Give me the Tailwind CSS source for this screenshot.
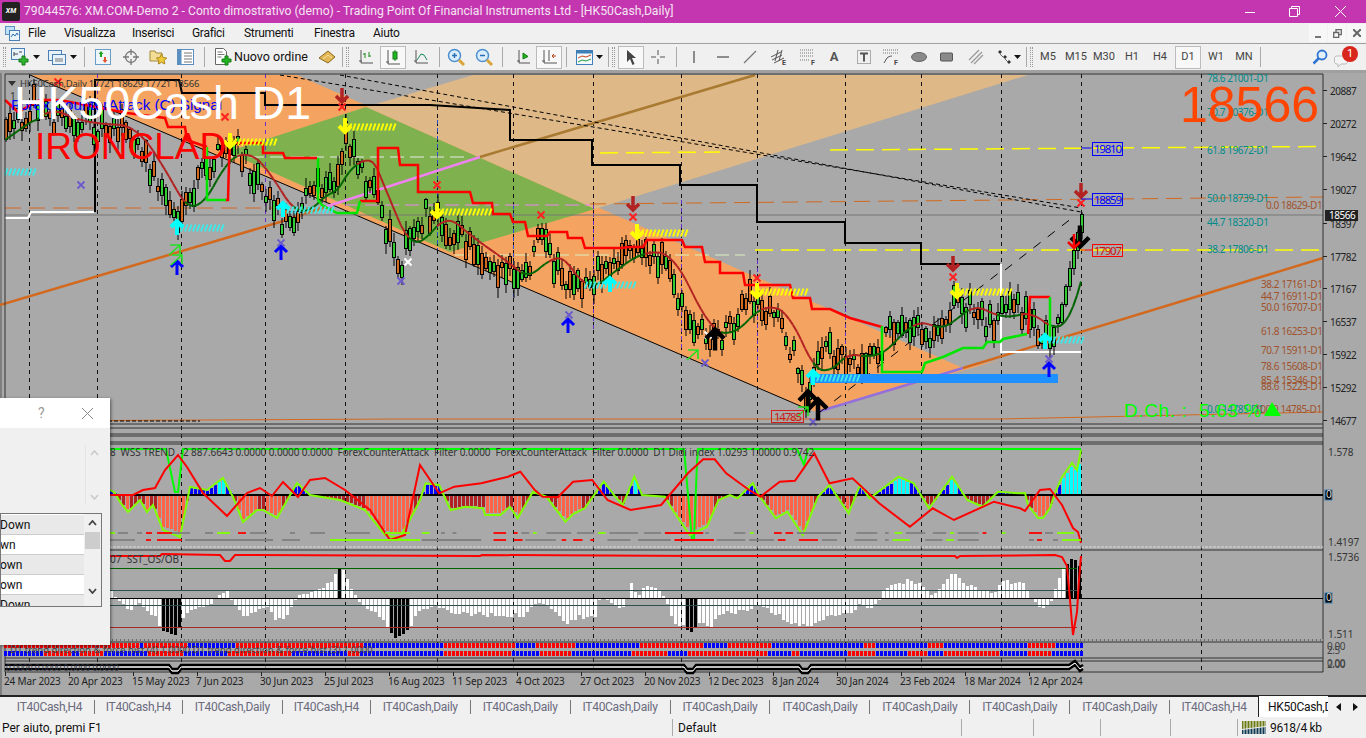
<!DOCTYPE html>
<html>
<head>
<meta charset="utf-8">
<script src="https://cdn.jsdelivr.net/npm/@tailwindcss/browser@4"></script>
</head>
<body class="m-0 overflow-hidden bg-[#f0f0f0]">
<div class="relative flex h-[738px] w-[1366px] flex-col overflow-hidden font-['Roboto',sans-serif] text-[12px] text-[#111]">

  <!-- title bar -->
  <div class="flex h-[23px] shrink-0 items-center bg-[#c436b0] text-white">
    <div class="ml-[2px] flex h-[19px] w-[18px] items-center justify-center rounded-[2px] bg-[#222] text-[7px] font-bold italic text-white">XM</div>
    <div class="ml-[4px] whitespace-nowrap text-[12.2px] text-[#f6e3f3]">79044576: XM.COM-Demo 2 - Conto dimostrativo (demo) - Trading Point Of Financial Instruments Ltd - [HK50Cash,Daily]</div>
    <div class="ml-auto flex items-center">
      <svg class="mr-[34px]" width="10" height="10" viewBox="0 0 10 10"><path d="M0 5.5H10" stroke="#fff"/></svg>
      <svg class="mr-[35px]" width="11" height="11" viewBox="0 0 11 11" fill="none" stroke="#fff"><path d="M.5 2.5h8v8h-8zM2.5 2.5v-2h8v8h-2"/></svg>
      <svg class="mr-[20px]" width="11" height="11" viewBox="0 0 11 11" stroke="#fff"><path d="M0 0L11 11M11 0L0 11"/></svg>
    </div>
  </div>

  <!-- menu bar -->
  <div class="flex h-[20px] shrink-0 items-center bg-[#f0f0f0] text-[12px] tracking-[-0.3px]">
    <svg class="ml-[5px] mr-[8px]" width="15" height="15" viewBox="0 0 15 15"><rect x=".5" y=".5" width="9" height="8" fill="#bfe0f5" stroke="#5a8fc0"/><rect x="4.5" y="4.5" width="10" height="10" fill="#eaf4fb" stroke="#4a7fb5"/><path d="M6 11l2-3 2 2 2-3 1 2" fill="none" stroke="#2b6cb0"/></svg>
    <span class="w-[36px]">File</span>
    <span class="w-[68px]">Visualizza</span>
    <span class="w-[60px]">Inserisci</span>
    <span class="w-[52px]">Grafici</span>
    <span class="w-[70px]">Strumenti</span>
    <span class="w-[59px]">Finestra</span>
    <span>Aiuto</span>
    <div class="ml-auto flex h-[18px] gap-[1px]">
      <div class="flex w-[18px] items-end justify-center bg-[#f7f7f7] pb-[4px]"><div class="h-[2px] w-[6px] bg-[#777]"></div></div>
      <div class="flex w-[18px] items-center justify-center bg-[#f7f7f7]"><svg width="9" height="9" viewBox="0 0 9 9" fill="none" stroke="#666" stroke-width="1.3"><path d="M.7 3.5h5v5h-5zM3 3V.7h5.3v5H6"/></svg></div>
      <div class="flex w-[19px] items-center justify-center bg-[#f7f7f7]"><svg width="8" height="8" viewBox="0 0 8 8" stroke="#666" stroke-width="2"><path d="M0 0L8 8M8 0L0 8"/></svg></div>
    </div>
  </div>

  <!-- toolbar -->
  <div class="flex h-[27px] shrink-0 items-center border-t border-[#a0a0a0] bg-[#f0f0f0]">
    <div class="ml-[3px] h-[20px] w-[3px] border-x border-dotted border-[#999]"></div>
    <svg class="ml-[5px]" width="18" height="18" viewBox="0 0 18 18"><rect x=".5" y=".5" width="13" height="11" fill="#e8f2fa" stroke="#4a7fb5"/><path d="M3 6h4M3 4v4M8 4h3" stroke="#444"/><path d="M9 8h3V5h3v3h3v3h-3v3h-3v-3H9z" transform="translate(-1 3)" fill="#2fb52f" stroke="#157a15"/></svg>
    <svg class="ml-[4px]" width="7" height="4" viewBox="0 0 7 4"><path d="M0 0h7L3.500 4z" fill="#111"/></svg>
    <svg class="ml-[8px]" width="18" height="18" viewBox="0 0 18 18" fill="#e8f2fa" stroke="#4a7fb5"><rect x=".5" y="2.500" width="13" height="10"/><rect x="4.500" y="6.500" width="13" height="10"/><path d="M7 11h8M7 13h8" stroke="#777"/></svg>
    <svg class="ml-[4px]" width="7" height="4" viewBox="0 0 7 4"><path d="M0 0h7L3.500 4z" fill="#111"/></svg>
    <div class="ml-[7px] h-[20px] w-[1px] bg-[#aaa]"></div>
    <svg class="ml-[9px]" width="18" height="18" viewBox="0 0 18 18"><rect x="1.500" y="1.500" width="15" height="15" fill="#eef6fb" stroke="#6a9cc5"/><path d="M6 9V6H4.500L7 3l2.500 3H8v3z" fill="#22a322"/><path d="M10 9v3H8.500l2.500 3 2.500-3H12V9z" fill="#e0552a"/></svg>
    <svg class="ml-[10px]" width="18" height="18" viewBox="0 0 18 18" fill="none" stroke="#777" stroke-width="1.300"><circle cx="9" cy="9" r="5.500"/><path d="M9 1v6M9 11v6M1 9h6M11 9h6"/></svg>
    <svg class="ml-[9px]" width="18" height="18" viewBox="0 0 18 18"><path d="M1 5V3h5l1 2h6v8H1z" fill="#f3dc95" stroke="#a58b3a"/><path d="M12.500 6l1.700 3.500 3.500.5-2.500 2.500.6 3.500-3.300-1.700L9.300 16l.6-3.500L7.400 10l3.500-.5z" fill="#f0c93a" stroke="#a8861c"/></svg>
    <svg class="ml-[10px]" width="18" height="18" viewBox="0 0 18 18"><rect x=".5" y="1.500" width="16" height="15" fill="#fff" stroke="#5a8fc0"/><rect x=".5" y="1.500" width="4" height="15" fill="#5a8fc0"/><path d="M7 5h8M7 8h8M7 11h8M7 14h8" stroke="#777"/></svg>
    <div class="ml-[9px] h-[20px] w-[1px] bg-[#aaa]"></div>
    <svg class="ml-[9px]" width="18" height="18" viewBox="0 0 18 18"><path d="M1.500.5h8l3 3v13h-11z" fill="#fff" stroke="#666"/><path d="M3.500 4h5M3.500 6.500h7M3.500 9h4" stroke="#777"/><path d="M10 9h3v3h3v3h-3v3h-3v-3H7v-3h3z" transform="translate(1 -1)" fill="#22b522" stroke="#157a15"/></svg>
    <span class="ml-[2px] w-[73px] whitespace-nowrap text-[12.5px]">Nuovo ordine</span>
    <svg class="ml-[11px]" width="18" height="18" viewBox="0 0 18 18"><path d="M1 10L10 3l7 6-7 6z" fill="#e2b654" stroke="#8a6a1c"/><path d="M5 11l5-4 4 3" fill="none" stroke="#f7e3a6"/></svg>
    <div class="ml-[6px] h-[20px] w-[1px] bg-[#aaa]"></div>
    <div class="ml-[3px] h-[20px] w-[3px] border-x border-dotted border-[#999]"></div>
    <svg class="ml-[9px]" width="16" height="16" viewBox="0 0 16 16" fill="none" stroke="#555"><path d="M3 1v13h12M1 12h3"/><path d="M7 9V4M7 5H5M11 8V3M11 7h2" stroke="#1a8a1a"/></svg>
    <div class="ml-[6px] flex h-[23px] w-[26px] items-center justify-center border border-[#bbb] bg-[#f8f8f8]"><svg width="16" height="17" viewBox="0 0 16 17" fill="none" stroke="#555"><path d="M3 1v14h12M1 13h3"/><rect x="8" y="3" width="4" height="7" fill="#22b522" stroke="#157a15"/><path d="M10 1v2M10 10v2" stroke="#157a15"/></svg></div>
    <svg class="ml-[7px]" width="16" height="16" viewBox="0 0 16 16" fill="none" stroke="#555"><path d="M3 1v13h12M1 12h3"/><path d="M4 11l4-6 3 1 3 5" stroke="#1a8a5a"/></svg>
    <div class="ml-[10px] h-[20px] w-[1px] bg-[#aaa]"></div>
    <svg class="ml-[7px]" width="19" height="19" viewBox="0 0 19 19"><circle cx="7.500" cy="7.500" r="6" fill="#d9edfb" stroke="#4a8fd0" stroke-width="1.500"/><path d="M5 7.500h5M7.500 5v5" stroke="#2d6fb5" stroke-width="1.500"/><path d="M12 12l5 5" stroke="#d8a53a" stroke-width="3"/></svg>
    <svg class="ml-[9px]" width="19" height="19" viewBox="0 0 19 19"><circle cx="7.500" cy="7.500" r="6" fill="#d9edfb" stroke="#4a8fd0" stroke-width="1.500"/><path d="M5 7.500h5" stroke="#2d6fb5" stroke-width="1.500"/><path d="M12 12l5 5" stroke="#d8a53a" stroke-width="3"/></svg>
    <div class="ml-[8px] h-[20px] w-[1px] bg-[#aaa]"></div>
    <svg class="ml-[11px]" width="17" height="16" viewBox="0 0 17 16" fill="none" stroke="#555"><path d="M5 1v13h11M3 12h3"/><path d="M9 4l5 3.500L9 10z" fill="#22b522" stroke="#157a15"/></svg>
    <div class="ml-[5px] flex h-[23px] w-[26px] items-center justify-center border border-[#bbb] bg-[#f8f8f8]"><svg width="17" height="16" viewBox="0 0 17 16" fill="none" stroke="#555"><path d="M3 1v13h13M1 12h3M8 1v11"/><path d="M15 7h-4M13 5l-2 2 2 2" stroke="#b5401a"/></svg></div>
    <div class="ml-[4px] h-[20px] w-[1px] bg-[#aaa]"></div>
    <svg class="ml-[9px]" width="17" height="15" viewBox="0 0 17 15"><rect x=".5" y=".5" width="16" height="14" fill="#f4f9fd" stroke="#3f7fb8"/><rect x=".5" y=".5" width="16" height="3" fill="#3f7fb8"/><path d="M2 8l4-2 4 1 5-2" fill="none" stroke="#c8451a"/><path d="M2 12l4-2 4 1 5-2" fill="none" stroke="#1f9a3a"/></svg>
    <svg class="ml-[3px]" width="7" height="4" viewBox="0 0 7 4"><path d="M0 0h7L3.500 4z" fill="#111"/></svg>
    <div class="ml-[5px] h-[20px] w-[1px] bg-[#aaa]"></div>
    <div class="ml-[3px] h-[20px] w-[3px] border-x border-dotted border-[#999]"></div>
    <div class="ml-[3px] flex h-[23px] w-[26px] items-center justify-center border border-[#bbb] bg-[#f8f8f8]"><svg width="11" height="15" viewBox="0 0 11 15"><path d="M1 0l9 8H6l2.500 6-2 1L4 9l-3 3z" fill="#444"/></svg></div>
    <svg class="ml-[6px]" width="16" height="16" viewBox="0 0 16 16" stroke="#555"><path d="M8 1v5M8 10v5M1 8h5M10 8h5"/></svg>
    <div class="ml-[10px] h-[20px] w-[1px] bg-[#aaa]"></div>
    <svg class="ml-[9px]" width="16" height="16" viewBox="0 0 16 16" stroke="#555" stroke-width="1.300"><path d="M8 2v12"/></svg>
    <svg class="ml-[13px]" width="16" height="16" viewBox="0 0 16 16" stroke="#555" stroke-width="1.300"><path d="M2 8h12"/></svg>
    <svg class="ml-[11px]" width="16" height="16" viewBox="0 0 16 16" stroke="#777" stroke-width="1.200"><path d="M2 14L14 2"/></svg>
    <svg class="ml-[13px]" width="16" height="18" viewBox="0 0 16 18" stroke="#555" fill="none"><path d="M0 9l10-5M1 12l10-5M3 15L13 10M4 13l3-11M8 13l3-11"/><text x="11" y="17" font-size="7" font-weight="700" fill="#444" stroke="none">E</text></svg>
    <svg class="ml-[13px]" width="16" height="18" viewBox="0 0 16 18" stroke="#777" fill="none" stroke-dasharray="1 1"><path d="M0 2h14M0 5h14M0 8h14M0 12h10"/><text x="11" y="17" font-size="7" font-weight="700" fill="#444" stroke="none" stroke-dasharray="0">F</text></svg>
    <span class="ml-[10px] flex w-[16px] justify-center text-[13px] font-bold text-[#555]">A</span>
    <svg class="ml-[14px]" width="16" height="16" viewBox="0 0 16 16" fill="none" stroke="#666" stroke-dasharray="1 1"><rect x="1.500" y="1.500" width="13" height="13"/><path d="M4 4.500h8M8 4.500v8" stroke="#555" stroke-width="2" stroke-dasharray="0"/></svg>
    <svg class="ml-[11px]" width="16" height="18" viewBox="0 0 16 18" stroke="#777" fill="none"><path d="M0 2h15M0 5h15" stroke-dasharray="1 1"/><path d="M1 15l3-5c1-1 3-2 5-2" stroke="#555"/><text x="11" y="17" font-size="7" font-weight="700" fill="#444" stroke="none">F</text></svg>
    <svg class="ml-[12px]" width="16" height="12" viewBox="0 0 16 12"><ellipse cx="8" cy="6" rx="7.500" ry="4.500" fill="#8a8a8a" stroke="#666"/></svg>
    <svg class="ml-[12px]" width="16" height="12" viewBox="0 0 16 12"><rect x="1.500" y="2" width="12" height="8" rx="1" fill="#8a8a8a" stroke="#555"/></svg>
    <svg class="ml-[13px]" width="16" height="16" viewBox="0 0 16 16" stroke="#999" stroke-width="1.300"><path d="M1 11L11 1M3 14L14 3M6 15L15 6"/></svg>
    <svg class="ml-[12px]" width="16" height="16" viewBox="0 0 16 16" fill="#333"><path d="M2 3l2-2 2 2-2 2zM7 8l2-2 2 2-2 2zM11 13l2-2 2 2-2 2z"/><path d="M4 5l3 3M9 10l3 3" stroke="#666"/></svg>
    <svg class="ml-[2px]" width="7" height="4" viewBox="0 0 7 4"><path d="M0 0h7L3.500 4z" fill="#111"/></svg>
    <div class="ml-[5px] h-[20px] w-[1px] bg-[#aaa]"></div>
    <div class="ml-[3px] h-[20px] w-[3px] border-x border-dotted border-[#999]"></div>
    <div class="ml-[1px] flex text-[11px] text-[#444]">
      <span class="flex h-[23px] w-[28px] items-center justify-center">M5</span>
      <span class="flex h-[23px] w-[28px] items-center justify-center">M15</span>
      <span class="flex h-[23px] w-[28px] items-center justify-center">M30</span>
      <span class="flex h-[23px] w-[28px] items-center justify-center">H1</span>
      <span class="flex h-[23px] w-[28px] items-center justify-center">H4</span>
      <span class="flex h-[23px] w-[26px] mx-[1px] items-center justify-center border border-[#bbb] bg-[#f8f8f8]">D1</span>
      <span class="flex h-[23px] w-[28px] items-center justify-center">W1</span>
      <span class="flex h-[23px] w-[28px] items-center justify-center">MN</span>
    </div>
    <div class="ml-[2px] h-[20px] w-[1px] bg-[#aaa]"></div>
    <svg class="ml-[51px]" width="16" height="16" viewBox="0 0 16 16" fill="none"><circle cx="10" cy="6" r="4.500" stroke="#2f74d0" stroke-width="1.800" fill="#e4f0fc"/><path d="M7 9L1.500 14.500" stroke="#2f74d0" stroke-width="2.500"/></svg>
    <div class="relative ml-[6px] h-[22px] w-[24px]">
      <svg width="14" height="12" viewBox="0 0 14 12" class="mt-[9px]"><path d="M2 1h10l1.500 1.500v5L12 9H7l-3 3V9H2L.5 7.500v-5z" fill="#f4f4f4" stroke="#bbb"/></svg>
      <div class="absolute left-[8px] top-[0px] flex h-[16px] w-[16px] items-center justify-center rounded-full bg-[#d8261c] text-[11px] text-white">1</div>
    </div>
  </div>

  <!-- chart -->
  <div class="relative h-[625px] w-[1366px] shrink-0 bg-[#a9a9a9]">
    <svg id="c" class="block" width="1366" height="625" viewBox="0 70 1366 625" font-family="Noto Sans">
      <rect x="0" y="70" width="1366" height="625" fill="#a9a9a9"/>
      <rect x="0" y="70" width="2" height="625" fill="#7f7f7f"/>
      <rect x="0" y="70" width="1366" height="3" fill="#a0a0a0"/>
      <!-- channel fills -->
      <polygon points="30,75 297,75 963,368 1000,360 817,412 805,408" fill="#f4a460"/>
      <polygon points="473,75 1028,75 595,209 366,107" fill="#deb887"/>
      <polygon points="227,152 366,107 595,209 450,252" fill="#7fb24e"/>
      <g id="v"></g>
      <!-- long lines -->
      <path d="M30 75L805 408" stroke="#000" fill="none"/>
      <path d="M0 305L280 222L325 207" stroke="#d2691e" stroke-width="2.500" fill="none"/>
      <path d="M325 207L480 157" stroke="#ee82ee" stroke-width="2.500" fill="none"/>
      <path d="M480 157L755 75" stroke="#a97a32" stroke-width="2.500" fill="none"/>
      <path d="M817 412L963 368" stroke="#9370db" stroke-width="2.500" fill="none"/>
      <path d="M963 368L1323 258" stroke="#d2691e" stroke-width="2.500" fill="none"/>
      <path d="M5 208H340M590 204L1323 197" stroke="#d2691e" stroke-dasharray="16 8" fill="none"/>
      <path d="M5 215H1323" stroke="#777" fill="none"/>
      <path d="M230 157H470" stroke="#e8e8e8" stroke-dasharray="14 6" fill="none"/>
      <path d="M345 205H590" stroke="#ee82ee" stroke-dasharray="14 6" fill="none"/>
      <path d="M455 255H745" stroke="#d8f0c0" stroke-dasharray="14 6" fill="none"/>
      <path d="M600 153L720 152M830 150L1320 146.500" stroke="#ffff00" stroke-width="1.500" stroke-dasharray="18 8" fill="none"/>
      <path d="M755 250H1323" stroke="#ffff00" stroke-width="1.500" stroke-dasharray="18 8" fill="none"/>
      <path d="M5 421L400 419H1000L1323 412" stroke="#d2691e" fill="none"/>
      <path d="M0 421H200" stroke="#000" stroke-dasharray="4 2" fill="none"/>
      <path d="M280 75L1081 208M340 75L1081 212" stroke="#000" stroke-dasharray="4 3" fill="none"/>
      <path d="M820 412L1000 272M1005 270L1072 218" stroke="#000" stroke-dasharray="9 9" fill="none"/>
      <!-- stepped bands -->
      <path d="M95 212V80H179L182 93H265V105H430L510 110V140H592V165H680V185H757V222H845V243H921V264H1000" stroke="#000" stroke-width="2" fill="none"/>
      <path d="M5 218H28L31 212H94" stroke="#fff" stroke-width="2" fill="none"/>
      <path d="M1001 264V352H1081" stroke="#fff" stroke-width="2" fill="none"/>
      <g id="cand"></g>
      <path d="M5 100L18 112L40 100H60L127 113L165 118L168 127H185L187 140L207 147M225 200H228L229 163L230 143H263V153H283L285 158H317M360 201H378V148H398L400 165H418V192H470L473 203H492L493 214H510L513 222H525L528 236H547L550 232H567L568 238H582L585 248H622L628 247H643L647 240H682L685 247H702L705 262H720V273H743L745 285H790L793 298H810L812 309H830L850 318L882 327M1028 334L1030 297H1050" stroke="#ff0000" stroke-width="2.500" fill="none"/>
      <path d="M207 147V200H226M317 159H318V200L322 205L337 213H357L360 201M882 326V372H922L925 363L943 357L963 348H983L987 342H1000L1003 339L1027 334M1050 297V340" stroke="#00e600" stroke-width="2.500" fill="none"/>
      <rect x="810" y="374" width="248" height="9" fill="#1e90ff"/>
      <g id="mk"></g>
      <!-- pane frames -->
      <g stroke="#333" fill="none">
        <path d="M5 74H1323V672H5zM5 424H1323M5 428H1323M5 434H1323M5 436H1323M5 442H1323M5 444H1323M5 550H1323M5 640H1323M5 642H1323M5 658H1323M5 661H1323"/>
      </g>
      <path d="M5 547H1323M5 640H1323" stroke="#ddd" stroke-dasharray="3 1" fill="none"/>
      <g id="sub"></g>
      <g id="lab" font-size="10" letter-spacing="-0.450"></g>
      <!-- overlay texts -->
      <path d="M8 81h8l-4 5z" fill="#333"/>
      <text x="20" y="87" font-size="9.500" letter-spacing="-0.250" fill="#333">HK50Cash,Daily  17721 18629 17721 18566</text>
      <text x="10" y="100" font-size="10" fill="#333">1 1</text>
      <text x="11" y="110" font-size="15.200" fill="#0000ff" font-family="Liberation Sans">Forex CounterAttack (C) Signal</text>
      <text x="14" y="119" font-size="46.500" fill="#fff" font-family="Liberation Sans">HK50Cash D1</text>
      <text x="35" y="159" font-size="37" fill="#ff0000" font-family="Liberation Sans">IRONCLAD</text>
      <text x="1180" y="122" font-size="50" fill="#ff4500" font-family="Liberation Sans">18566</text>
      <text x="1124" y="417" font-size="19" fill="#00ff00" font-family="Liberation Sans" letter-spacing="0.600" xml:space="preserve">D.Ch. :  5.63 %</text>
      <polygon points="1272,402 1281,416 1264,416" fill="#00ff00"/>
      <!-- price tags -->
      <g font-size="11.500" font-family="Noto Sans">
        <path d="M1081 148H1093M1081 199H1093" stroke="#0000ff"/>
        <path d="M1081 250H1093" stroke="#ff0000"/>
        <rect x="1092.500" y="142.500" width="30" height="13" fill="none" stroke="#0000ff"/><text x="1094" y="153" fill="#0000ff" textLength="28">19810</text>
        <rect x="1092.500" y="193.500" width="30" height="12" fill="none" stroke="#0000ff"/><text x="1094" y="204" fill="#0000ff" textLength="28">18859</text>
        <rect x="1092.500" y="244.500" width="30" height="12" fill="none" stroke="#ff0000"/><text x="1094" y="255" fill="#d01010" textLength="28">17907</text>
        <rect x="771.500" y="410.500" width="32" height="12" fill="none" stroke="#d02020"/><text x="774" y="421" fill="#c81818" textLength="28">14785</text>
      </g>
      <rect x="1325" y="210" width="33" height="11" fill="#222"/>
      <text x="1329" y="219" font-size="10" letter-spacing="-0.450" fill="#fff">18566</text>
    </svg>

    <!-- floating dialog -->
    <div class="absolute left-0 top-[328px] flex h-[247px] w-[110px] flex-col bg-[#f0f0f0] shadow-[1px_1px_3px_rgba(0,0,0,0.5)]">
      <div class="flex h-[30px] shrink-0 items-center bg-white text-[#999]">
        <span class="ml-[38px] text-[14px]">?</span>
        <svg class="ml-[37px]" width="11" height="11" viewBox="0 0 11 11" stroke="#888"><path d="M0 0L11 11M11 0L0 11"/></svg>
      </div>
      <div class="ml-[85px] mt-[17px] flex h-[60px] w-[18px] shrink-0 flex-col items-center justify-between border-l border-[#e5e5e5] py-[5px]">
        <svg width="9" height="6" viewBox="0 0 9 6" fill="none" stroke="#c8c8c8" stroke-width="1.500"><path d="M1 5l3.500-4L8 5"/></svg>
        <svg width="9" height="6" viewBox="0 0 9 6" fill="none" stroke="#c8c8c8" stroke-width="1.500"><path d="M1 1l3.500 4L8 1"/></svg>
      </div>
      <div class="mt-[8px] flex h-[94px] w-[102px] shrink-0 overflow-hidden border border-[#777] bg-white text-[12px]">
        <div class="w-[83px] overflow-hidden pt-[1px]">
          <div class="flex h-[20px] items-center border-b border-[#ccc] bg-[#e9e9e9] -indent-[1px]">Down</div>
          <div class="flex h-[20px] items-center border-b border-[#ccc] bg-white -indent-[1px]">wn</div>
          <div class="flex h-[20px] items-center border-b border-[#ccc] bg-[#e9e9e9] -indent-[1px]">own</div>
          <div class="flex h-[20px] items-center border-b border-[#ccc] bg-white -indent-[1px]">own</div>
          <div class="flex h-[20px] items-center bg-[#e9e9e9] -indent-[1px]">Down</div>
        </div>
        <div class="flex w-[17px] flex-col items-center bg-[#f0f0f0]">
          <svg class="mt-[6px]" width="9" height="6" viewBox="0 0 9 6" fill="none" stroke="#444" stroke-width="1.800"><path d="M1 5l3.500-4L8 5"/></svg>
          <div class="mt-[6px] h-[17px] w-[15px] bg-[#cdcdcd]"></div>
          <svg class="mt-[39px]" width="9" height="6" viewBox="0 0 9 6" fill="none" stroke="#444" stroke-width="1.800"><path d="M1 1l3.500 4L8 1"/></svg>
        </div>
      </div>
    </div>
  </div>

  <!-- tabs -->
  <div class="flex h-[22px] shrink-0 items-stretch border-t-2 border-[#222] bg-[#f0f0f0] pl-[5px] text-[12px] tracking-[-0.3px] text-[#6b6b7e]">
    <div class="my-[3px] flex w-[90px] items-center justify-center border-r border-[#777]">IT40Cash,H4</div>
    <div class="my-[3px] flex w-[88px] items-center justify-center border-r border-[#777]">IT40Cash,H4</div>
    <div class="my-[3px] flex w-[100px] items-center justify-center border-r border-[#777]">IT40Cash,Daily</div>
    <div class="my-[3px] flex w-[88px] items-center justify-center border-r border-[#777]">IT40Cash,H4</div>
    <div class="my-[3px] flex w-[100px] items-center justify-center border-r border-[#777]">IT40Cash,Daily</div>
    <div class="my-[3px] flex w-[100px] items-center justify-center border-r border-[#777]">IT40Cash,Daily</div>
    <div class="my-[3px] flex w-[100px] items-center justify-center border-r border-[#777]">IT40Cash,Daily</div>
    <div class="my-[3px] flex w-[100px] items-center justify-center border-r border-[#777]">IT40Cash,Daily</div>
    <div class="my-[3px] flex w-[100px] items-center justify-center border-r border-[#777]">IT40Cash,Daily</div>
    <div class="my-[3px] flex w-[100px] items-center justify-center border-r border-[#777]">IT40Cash,Daily</div>
    <div class="my-[3px] flex w-[100px] items-center justify-center border-r border-[#777]">IT40Cash,Daily</div>
    <div class="my-[3px] flex w-[100px] items-center justify-center border-r border-[#777]">IT40Cash,Daily</div>
    <div class="my-[3px] flex w-[88px] items-center justify-center">IT40Cash,H4</div>
    <div class="-mt-[2px] flex w-[70px] items-center overflow-hidden whitespace-nowrap border-l border-t border-[#222] bg-white pl-[9px] text-[#111]">HK50Cash,Daily</div>
    <div class="flex w-[38px] items-center justify-around bg-[#f0f0f0] px-[2px] text-[#111]">
      <svg width="5" height="8" viewBox="0 0 5 8"><path d="M5 0v8L0 4z" fill="#111"/></svg>
      <svg width="5" height="8" viewBox="0 0 5 8"><path d="M0 0v8l5-4z" fill="#111"/></svg>
    </div>
  </div>

  <!-- status bar -->
  <div class="flex h-[21px] shrink-0 items-center bg-[#f0f0f0] text-[12px]">
    <div class="ml-[2px] w-[670px]">Per aiuto, premi F1</div>
    <div class="flex h-[17px] w-[289px] items-center border-l border-[#aaa] pl-[5px]">Default</div>
    <div class="h-[17px] w-[72px] border-l border-[#aaa]"></div>
    <div class="h-[17px] w-[67px] border-l border-[#aaa]"></div>
    <div class="h-[17px] w-[70px] border-l border-[#aaa]"></div>
    <div class="h-[17px] w-[67px] border-l border-[#aaa]"></div>
    <div class="flex h-[17px] items-center border-l border-[#aaa] pl-[4px]">
      <svg width="24" height="13" viewBox="0 0 24 13">
        <path d="M0 0h24v5l-24 3z" fill="#6b7a12"/>
        <path d="M0 13V9l24-3v7z" fill="#0f3a52"/>
        <path d="M2 0v13M5 0v13M8 0v13M11 0v13M14 0v13M17 0v13M20 0v13M23 0v13" stroke="#f0f0f0"/>
      </svg>
      <span class="ml-[4px] whitespace-nowrap tracking-[-0.3px]">9618/4 kb</span>
    </div>
  </div>
</div>

<script>
(function () {
function lerp(p, x) {
  if (x <= p[0][0]) return p[0][1];
  for (var i = 1; i < p.length; i++) {
    if (x <= p[i][0]) { var a = p[i-1], b = p[i]; return a[1] + (b[1]-a[1]) * (x-a[0]) / (b[0]-a[0]); }
  }
  return p[p.length-1][1];
}
var seed = 12345;
function rnd() { seed = (seed * 16807) % 2147483647; return seed / 2147483647; }
function el(g, s) { document.getElementById(g).insertAdjacentHTML('beforeend', s); }
function ln(x1,y1,x2,y2,c,w,extra) { return '<line x1="'+x1+'" y1="'+y1+'" x2="'+x2+'" y2="'+y2+'" stroke="'+c+'" stroke-width="'+(w||1)+'" '+(extra||'')+'/>'; }
function poly(pts,c,w) { return '<polyline points="'+pts.map(function(p){return p[0].toFixed(1)+','+p[1].toFixed(1);}).join(' ')+'" fill="none" stroke="'+c+'" stroke-width="'+(w||2)+'"/>'; }
function mx(px) { return 420 + px * 0.3827; }
function mp(a) { return a.map(function(p){ return [mx(p[0]), 440 + p[1]/3]; }); }

/* vertical separators */
[29,97,181,265,345,437,513,593,681,757,845,921,1001,1081,1201].forEach(function(x){
  el('v', ln(x+.5,74,x+.5,672,'#111',1,'stroke-dasharray="4 4"'));
});
[[97,74,100],[265,74,225],[437,120,250],[513,205,300],[593,205,330],[681,200,350],[757,260,370],[845,300,365]].forEach(function(r){
  el('v', ln(r[0]+.5,r[1],r[0]+.5,r[2],r[0]==437||r[0]==513?'#2a50d0':'#6a2fc8',1,'stroke-dasharray="4 4"'));
});

/* candles */
var path = [[5,140],[30,105],[60,120],[95,125],[120,125],[150,170],[180,225],[200,175],[230,145],[260,180],[285,225],[310,190],[335,190],[345,130],[370,190],[400,262],[425,210],[460,240],[490,260],[520,285],[540,240],[570,295],[600,270],[630,250],[660,255],[690,325],[715,340],[750,300],[780,320],[805,392],[825,350],[855,360],[880,345],[900,315],[930,335],[955,300],[985,320],[1020,310],[1045,340],[1060,310],[1081,215]];
var closes = [], xs = [], s = '';
for (var x = 5; x <= 1081; x += 4) {
  var mid = lerp(path, x) + (rnd()-.5)*26;
  var len = 5 + rnd()*18;
  var up = rnd() < .52;
  if (x >= 1060) { up = true; len = 18; mid = lerp(path, x) + 8; }
  var bodyTop = mid - len/2;
  var hi = bodyTop - 2 - rnd()*8, lo = bodyTop + len + 2 + rnd()*8;
  s += ln(x+1, hi.toFixed(0), x+1, lo.toFixed(0), '#000', 1);
  s += '<rect x="'+(x-.5)+'" y="'+(bodyTop|0)+'.5" width="3" height="'+(len|0)+'" fill="'+(up?'#32cd32':'#d2691e')+'" stroke="#000"/>';
  closes.push(lerp(path,x)); xs.push(x);
}
el('cand', s);

/* trend MA, coloured by the side of price */
s = '';
var ma = closes.map(function(c,i){ var n = 0, t = 0; for (var j = Math.max(0,i-8); j <= i; j++) { t += closes[j]; n++; } return t/n; });
for (var i = 1; i < ma.length; i++) {
  var col = lerp(path, xs[i]) < ma[i] ? '#006400' : '#b22222';
  s += ln(xs[i-1], ma[i-1].toFixed(1), xs[i], ma[i].toFixed(1), col, 2);
}
el('cand', s);

/* markers */
function cross(x,y,c,w) { el('mk', '<path d="M'+(x-3.5)+' '+(y-3.5)+'L'+(x+3.5)+' '+(y+3.5)+'M'+(x+3.5)+' '+(y-3.5)+'L'+(x-3.5)+' '+(y+3.5)+'" stroke="'+c+'" stroke-width="'+(w||2)+'"/>'); }
function arrow(x,y,c,dir,k,w) {
  k = k || 1; var d = dir * k;
  el('mk', '<path d="M'+x+' '+(y+7*d)+'V'+(y-7*d)+'M'+(x-6*k)+' '+(y-1*d)+'L'+x+' '+(y-7*d)+'L'+(x+6*k)+' '+(y-1*d)+'" fill="none" stroke="'+c+'" stroke-width="'+(w||3)+'"/>');
}
function hatch(a,b,y,c) { var t=''; for (var x=a;x<b;x+=4) t+=ln(x,y+3.5,x+2.5,y-3.5,c,2); el('mk', t); }
[[5,35,172],[177,222,228],[283,335,210],[585,635,285],[813,860,378],[1045,1083,340]].forEach(function(r){ hatch(r[0],r[1],r[2],'#40e8e8'); });
[[230,275,142],[345,395,127],[437,490,212],[637,688,233],[757,808,292],[957,1010,292]].forEach(function(r){ hatch(r[0],r[1],r[2],'#ffff00'); arrow(r[0],r[2]-2,'#ffff00',-1,1,4); });
[[177,228],[283,210],[610,285],[813,378],[1045,342]].forEach(function(r){ arrow(r[0],r[1],'#00ffff',1,1,4); });
[[177,268],[281,253],[568,326],[1049,370]].forEach(function(r){ arrow(r[0],r[1],'#0000ff',1,1,3); });
[[342,95],[633,203],[953,263],[1081,190]].forEach(function(r){ arrow(r[0],r[1],'#b22222',-1,1,3.500); });
[[58,82],[225,117],[342,107],[437,185],[541,215],[633,217],[757,278],[953,277],[1081,203]].forEach(function(r){ cross(r[0],r[1],'#ff2020'); });
[[81,185],[281,243],[401,281],[569,315],[705,363],[1049,359],[813,422]].forEach(function(r){ cross(r[0],r[1],'#6a5acd',1.800); });
[[408,262],[708,335]].forEach(function(r){ cross(r[0],r[1],'#fff',2); });
[[715,340],[808,402],[818,410]].forEach(function(r){ arrow(r[0],r[1],'#000',1,1.500,4.500); });
arrow(1080,236,'#000',-1,1.500,4.500);
arrow(1074,241,'#ff0000',-1,1,2.500);
[[175,250],[177,260],[693,355],[803,412]].forEach(function(r){
  el('mk','<path d="M'+(r[0]-6)+' '+(r[1]+5)+'L'+(r[0]+5)+' '+(r[1]-5)+'M'+(r[0]-5)+' '+(r[1]-5)+'H'+(r[0]+5)+'V'+(r[1]+4)+'" fill="none" stroke="#22e022" stroke-width="1.600"/>');
});

/* pane: WSS trend */
var red = [[110,495],[133,495],[143,490],[155,488],[165,470],[178,455],[187,467],[203,493],[227,516],[247,493],[260,488],[272,496],[283,482],[298,497],[310,480],[325,478],[345,490],[370,510],[390,540],[405,535]]
  .concat(mp([[0,75],[50,160],[90,140],[160,130],[230,110],[262,95],[300,150],[320,170],[360,172],[400,125],[450,120],[490,180],[550,210],[630,195],[700,100],[740,58],[770,58],[800,100],[860,150],[890,170],[940,125],[980,122],[1030,40],[1070,130],[1130,115],[1200,190],[1280,260],[1340,205],[1395,240],[1500,185],[1568,205]]))
  .concat([[1025,511],[1040,490],[1050,489],[1062,505],[1073,528],[1078,532],[1081,543]]);
var lime = [[110,490],[115,493],[120,502],[128,512],[140,500],[147,512],[153,505],[163,530],[180,537],[190,487],[207,490],[223,478],[233,497],[243,522],[257,510],[263,510],[277,518],[297,483],[310,495],[340,500],[365,510],[385,535],[400,538],[415,510]]
  .concat(mp([[0,180],[15,130],[50,135],[80,210],[120,200],[165,205],[170,225],[210,225],[235,200],[255,235],[295,155],[330,170],[380,245],[400,222],[430,205],[480,125],[510,170],[530,195],[560,110],[580,165],[640,170],[660,210],[705,285],[750,260],[780,180],[810,165],[830,175],[870,130],[885,165],[930,235],[960,215],[1000,285],[1040,170],[1070,135],[1120,220],[1150,135],[1175,175],[1250,110],[1290,130],[1330,205],[1390,110],[1430,180],[1470,200],[1510,155],[1568,160]]))
  .concat([[1025,493],[1028,505],[1038,518],[1043,518],[1050,508],[1055,493],[1062,477],[1072,463],[1077,470],[1081,450]]);
s = '';
for (x = 111; x <= 1081; x += 4) {
  var ly = lerp(lime, x), v = (495 - ly) * .9;
  var cc = v >= 0 ? (v > 12 ? '#00ffff' : '#0000ff') : (v > -14 ? '#b22222' : '#ff6347');
  if (v > 12 && x < 1000 && rnd() < .25) cc = '#0000ff';
  s += '<rect x="'+(x-1)+'" y="'+(v>=0?495-v:495).toFixed(0)+'" width="3" height="'+Math.abs(v).toFixed(0)+'" fill="'+cc+'"/>';
}
s += ln(5,495,1323,495,'#000',2);
s += poly([[110,449],[166,449],[175,492],[178,492],[183,449],[684,449],[692,540],[694,540],[697,462],[698,449],[797,449],[804,465],[808,449],[1081,449]],'#00ff00',2);
s += poly(lime,'#7fff00',2) + poly(red,'#ff0000',2);
var G='#808080', R='#ff0000', L='#7fff00';
function dash(y, rows, map) { rows.forEach(function(d){ var a = map ? mx(d[0]) : d[0], b = map ? mx(d[1]) : d[1]; s += ln(a.toFixed(1),y,b.toFixed(1),y,d[2],1.800); }); }
dash(533, [[110,115,L],[118,128,G],[137,142,G],[146,152,R],[157,172,R],[172,190,G],[205,213,G],[217,230,L],[238,246,R],[250,267,G],[290,295,G],[310,325,G],[345,370,G],[385,410,L]]);
dash(540, [[110,135,G],[146,151,R],[157,182,R],[185,273,G],[282,300,G],[330,420,L]]);
dash(533, [[5,25,L],[55,65,G],[85,95,G],[192,225,R],[245,255,R],[265,285,G],[295,305,L],[330,395,G],[410,455,G],[465,485,L],[495,570,G],[585,630,G],[640,740,R],[745,755,G],[820,850,G],[862,872,L],[925,945,R],[955,975,R],[985,1100,G],[1140,1195,G],[1215,1225,G],[1240,1260,L],[1270,1320,G],[1340,1375,G],[1385,1395,L],[1405,1460,G],[1470,1480,R],[1520,1530,L]], true);
dash(540, [[5,160,G],[192,225,R],[245,268,R],[275,355,G],[370,382,R],[400,425,R],[445,455,R],[490,550,G],[570,655,G],[665,768,R],[775,850,G],[860,925,G],[935,955,R],[990,1040,R],[1050,1090,G],[1135,1195,G],[1215,1225,G],[1235,1280,L],[1320,1365,G],[1375,1395,L],[1405,1460,G]], true);
dash(533, [[1029,1042,R],[1045,1053,G],[1057,1074,L]]);
dash(540, [[1029,1034,G],[1037,1042,R],[1053,1058,G],[1062,1081,L]]);

/* pane: SST */
var h4 = [[110,8],[117,-2],[122,-5],[128,-13],[140,-5],[145,-13],[150,-15],[157,-18],[160,-32],[175,-37],[181,-27],[188,-13],[197,-10],[210,-7],[217,2],[227,7],[233,-7],[245,-18],[257,-13],[267,-10],[277,-23],[287,-17],[295,-2],[300,5],[310,5],[330,15],[340,32],[345,20],[360,-5],[380,-20],[395,-40],[405,-35],[415,-20]]
  .concat([[0,-12],[40,-8],[80,-15],[170,-17],[270,-18],[300,-5],[320,-5],[355,-13],[375,-28],[410,-20],[440,-18],[460,-18],[470,2],[500,-5],[525,-12],[540,-3],[545,8],[555,22],[565,-2],[585,12],[620,10],[640,0],[660,-22],[690,-28],[705,-35],[715,-31],[735,-28],[765,-27],[790,-15],[820,-15],[860,-12],[880,-5],[930,-17],[990,-28],[1030,-28],[1070,-15],[1110,-18],[1130,-15],[1150,-5],[1170,-12],[1200,-2],[1205,7],[1250,15],[1280,18],[1310,12],[1340,2],[1370,17],[1390,27],[1410,17],[1440,12],[1470,7],[1500,5],[1520,17],[1568,15]].map(function(p){ return [mx(p[0]), p[1]]; }))
  .concat([[1025,17],[1029,0],[1033,-2],[1040,-10],[1050,-8],[1053,5],[1057,15],[1062,27],[1065,32],[1073,42],[1078,32]]);
for (x = 111; x <= 1079; x += 4) {
  var hv = lerp(h4, x), hn = Math.abs(hv) >= 30 ? hv : hv * (.85 + rnd()*.28);
  if (Math.abs(hn) >= 29.5 && Math.abs(hv) < 30) hn = hv;
  var bc = Math.abs(hn) >= 30 ? '#000' : '#fff';
  s += '<rect x="'+(x-1)+'" y="'+(hn>=0?598-hn:598).toFixed(0)+'" width="3" height="'+Math.abs(hn).toFixed(0)+'" fill="'+bc+'"/>';
}
s += ln(110,568.5,1077,568.5,'#006400',1) + ln(110,590.5,1077,590.5,'#2f4f4f',1) + ln(110,605.5,1077,605.5,'#2f4f4f',1) + ln(110,627.5,1077,627.5,'#a52a2a',1);
s += ln(5,598.5,1323,598.5,'#000',1);
s += poly([[110,556],[160,556],[162,554],[220,555],[225,561],[230,561],[235,555],[480,556],[482,555],[700,556],[900,556],[955,556],[957,558],[960,556],[1055,555],[1062,557],[1067,566],[1070,600],[1073,635],[1077,612],[1079,580],[1081,556]],'#ff0000',2);

/* pane: dots */
var r1 = [[5,140,1],[140,143,0],[143,187,1],[187,235,0],[235,363,1],[363,443,0],[443,517,1],[517,537,0],[537,577,1],[577,638,0],[638,705,1],[705,727,0],[727,772,1],[772,862,0],[862,877,1],[877,928,0],[928,944,1],[944,1027,0],[1027,1056,1],[1056,1084,0]];
var r2 = [[5,43,0],[43,70,1],[70,80,0],[80,103,1],[103,147,0],[147,183,1],[183,227,0],[227,292,1],[292,347,0],[347,358,1],[358,443,0],[443,510,1],[510,538,0],[538,573,1],[573,632,0],[632,667,1],[667,688,0],[688,768,1],[768,793,0],[793,800,1],[800,848,0],[848,875,1],[875,908,0],[908,926,1],[926,943,0],[943,1001,1],[1001,1027,0],[1027,1051,1],[1051,1084,0]];
function dots(runs,y) { for (var x = 5; x <= 1081; x += 4) { var on = 0; runs.forEach(function(r){ if (x>=r[0]&&x<r[1]) on = r[2]; }); s += '<rect x="'+(x-1)+'" y="'+(y-2)+'" width="3" height="5" fill="'+(on?'#ff0000':'#0000ff')+'"/>'; } }
dots(r1,645); dots(r2,653);

/* pane: bottom trace */
function tr(y) {
  var p = [[5,y]];
  [175,690,805].forEach(function(b){ p.push([b-6,y],[b-3,y+4],[b+3,y+4],[b+6,y]); });
  p.push([1069,y],[1075,y-4],[1080,y+2],[1083,y]);
  return p;
}
s += poly(tr(665),'#000',2.500) + poly(tr(669),'#000',2.500) + poly(tr(667),'#fff',1);
el('sub', s);
el('sub', '<text x="10" y="653" font-size="9.500" fill="#444">D1 trend direction &amp; force hist (4) 1.0000  D1 trend direction &amp; force hist (3) 1.0000</text>');
el('sub', '<text x="6" y="671" font-size="8.500" fill="#334">0.0000 0.0000 0.0000 0.0000</text>');
el('sub', '<text x="110" y="456" font-size="10" fill="#333" letter-spacing="-0.100" xml:space="preserve">8  WSS TREND  -2 887.6643 0.0000 0.0000 0.0000  ForexCounterAttack  Filter 0.0000  ForexCounterAttack  Filter 0.0000  D1 Didi index 1.0293 1.0000 0.9742</text>');
el('sub', '<text x="110" y="563" font-size="10" fill="#333" xml:space="preserve">07  SST_OS/OB</text>');

/* labels */
var t = '';
function txt(x,y,str,c,extra) { t += '<text x="'+x+'" y="'+y+'" fill="'+c+'" '+(extra||'')+'>'+str+'</text>'; }
[['78.6 21001-D1',82],['70.7 20376-D1',116],['61.8 19672-D1',154],['50.0 18739-D1',202],['44.7 18320-D1',226],['38.2 17806-D1',253],['0.0 14785-D1',413]].forEach(function(r){ txt(1207,r[1],r[0],'#008b8b'); });
[['0.0 18629-D1',1266,209],['38.2 17161-D1',1261,288],['44.7 16911-D1',1261,300],['50.0 16707-D1',1261,311],['61.8 16253-D1',1261,335],['70.7 15911-D1',1261,354],['78.6 15608-D1',1261,370],['85.4 15346-D1',1261,384],['88.6 15223-D1',1261,390],['100.0 14785-D1',1255,413]].forEach(function(r){ txt(r[1],r[2],r[0],'#a0522d'); });
[['20887',94],['20272',127],['19642',160],['19027',193],['18397',227],['17782',260],['17167',292],['16537',325],['15922',358],['15292',391],['14677',424]].forEach(function(r){
  t += ln(1323,r[1]-3.5,1327,r[1]-3.5,'#222',1);
  txt(1330,r[1]+1,r[0],'#222');
});
txt(1328,456,'1.578','#333','letter-spacing="0"'); txt(1328,546,'1.4197','#333','letter-spacing="0"'); txt(1328,561,'1.5736','#333','letter-spacing="0"'); txt(1328,638,'1.511','#333','letter-spacing="0"');
t += '<rect x="1325" y="490" width="7" height="10" fill="#000" stroke="#3a7fb0"/><rect x="1325" y="593" width="7" height="10" fill="#000" stroke="#3a7fb0"/>';
txt(1326,498,'0','#ddd'); txt(1326,601,'0','#ddd');
txt(1327,650,'0.00','#444'); txt(1327,654,'2.5','#444'); txt(1327,667,'0.00','#444'); txt(1327,668,'2.00','#444');
var dates = ['24 Mar 2023','20 Apr 2023','15 May 2023','7 Jun 2023','30 Jun 2023','25 Jul 2023','16 Aug 2023','11 Sep 2023','4 Oct 2023','27 Oct 2023','20 Nov 2023','12 Dec 2023','8 Jan 2024','30 Jan 2024','23 Feb 2024','18 Mar 2024','12 Apr 2024'];
dates.forEach(function(d,i){
  var x = 4 + i*64;
  t += ln(x+1.5,672,x+1.5,676,'#222',1);
  txt(x,685,d,'#222','letter-spacing="-0.150"');
});
el('lab', t);
})();
</script>
</body>
</html>
